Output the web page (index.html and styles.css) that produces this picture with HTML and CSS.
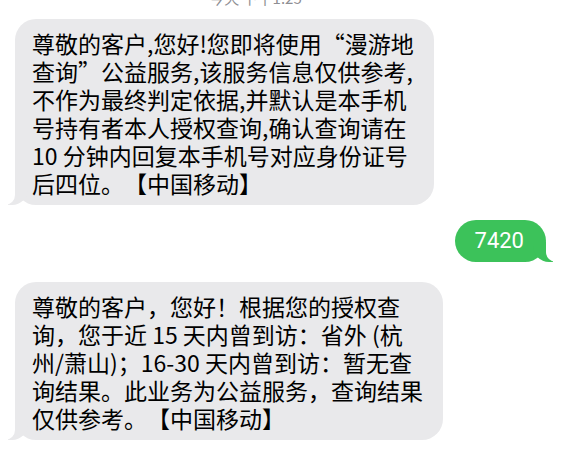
FILE: index.html
```html
<!DOCTYPE html>
<html lang="zh-CN">
<head>
<meta charset="utf-8">
<link rel="stylesheet" href="styles.css">
</head>
<body>
<div class="thread">
  <div class="stamp">今天 下午1:25</div>
  <div class="bubble in first">尊敬的客户,您好!您即将使用“漫游地<br>查询”公益服务,该服务信息仅供参考,<br>不作为最终判定依据,并默认是本手机<br>号持有者本人授权查询,确认查询请在<br>10 分钟内回复本手机号对应身份证号<br>后四位。【中国移动】</div>
  <div class="bubble out">7420</div>
  <div class="bubble in third">尊敬的客户，您好！根据您的授权查<br>询，您于近 15 天内曾到访：省外 (杭<br>州/萧山)；16-30 天内曾到访：暂无查<br>询结果。此业务为公益服务，查询结果<br>仅供参考。【中国移动】</div>
</div>
</body>
</html>
```
FILE: styles.css
```css
html, body {
  margin: 0;
  padding: 0;
  background: #ffffff;
  overflow: hidden;
}
body {
  font-family: "Noto Sans CJK SC", "Noto Sans", sans-serif;
  color: #000;
}
.thread {
  display: flex;
  flex-direction: column;
  align-items: flex-start;
  padding: 0 20px 0 15px;
}
.stamp {
  align-self: stretch;
  text-align: center;
  font-size: 15px;
  line-height: 18px;
  color: #8e8e93;
  margin-top: -11px;
  padding-right: 50px;
}
.bubble {
  position: relative;
  font-size: 23px;
  line-height: 28px;
  border-radius: 21px;
  text-spacing-trim: space-all;
}
.in {
  background: #e9e9eb;
  padding: 10px 20px 8px 17px;
}
.first {
  margin-top: 12px;
}
.out {
  align-self: flex-end;
  background: #3cc25a;
  color: #fff;
  font-size: 22px;
  padding: 7px 22px 7px 20px;
  margin-top: 15px;
  font-family: Roboto, "Noto Sans", sans-serif;
}
.third {
  margin-top: 20px;
}
.in::before {
  content: "";
  position: absolute;
  bottom: 0;
  left: -7px;
  width: 20px;
  height: 20px;
  background: #e9e9eb;
  border-bottom-right-radius: 16px;
}
.in::after {
  content: "";
  position: absolute;
  bottom: 0;
  left: -10px;
  width: 10px;
  height: 20px;
  background: #fff;
  border-bottom-right-radius: 10px;
}
.out::before {
  content: "";
  position: absolute;
  bottom: 0;
  right: -7px;
  width: 20px;
  height: 20px;
  background: #3cc25a;
  border-bottom-left-radius: 16px;
}
.out::after {
  content: "";
  position: absolute;
  bottom: 0;
  right: -10px;
  width: 10px;
  height: 20px;
  background: #fff;
  border-bottom-left-radius: 10px;
}
```
